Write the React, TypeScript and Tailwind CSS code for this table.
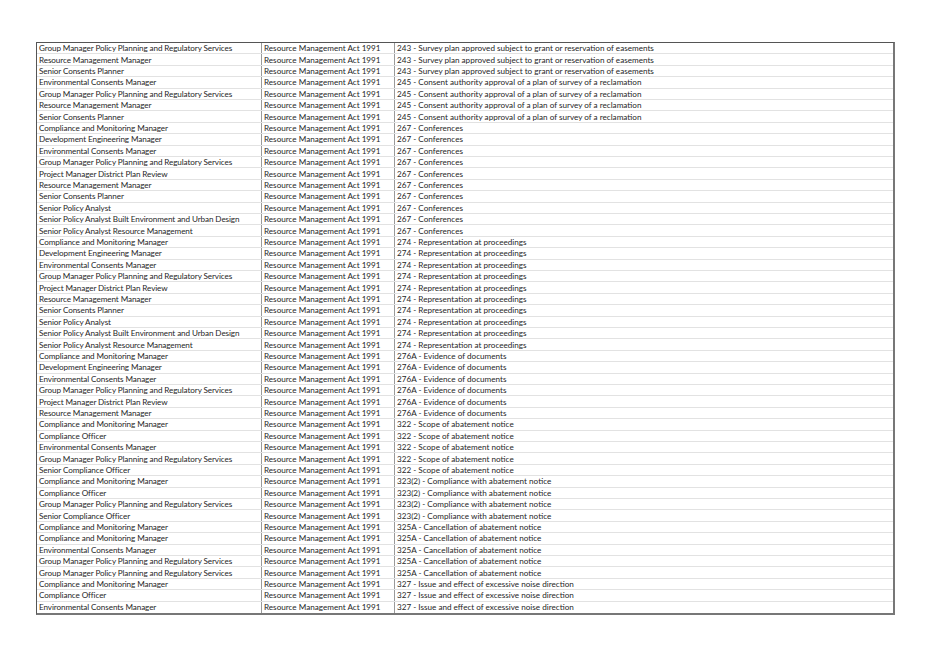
const GM = "Group Manager Policy Planning and Regulatory Services";
const RMM = "Resource Management Manager";
const SCP = "Senior Consents Planner";
const ECM = "Environmental Consents Manager";
const CMM = "Compliance and Monitoring Manager";
const DEM = "Development Engineering Manager";
const PM = "Project Manager District Plan Review";
const SPA = "Senior Policy Analyst";
const SPAB = "Senior Policy Analyst Built Environment and Urban Design";
const SPAR = "Senior Policy Analyst Resource Management";
const CO = "Compliance Officer";
const SCO = "Senior Compliance Officer";

const S243 = "243 - Survey plan approved subject to grant or reservation of easements";
const S245 = "245 - Consent authority approval of a plan of survey of a reclamation";
const S267 = "267 - Conferences";
const S274 = "274 - Representation at proceedings";
const S276 = "276A - Evidence of documents";
const S322 = "322 - Scope of abatement notice";
const S323 = "323(2) - Compliance with abatement notice";
const S325 = "325A - Cancellation of abatement notice";
const S327 = "327 - Issue and effect of excessive noise direction";

const rows: [string, string][] = [
  [GM, S243], [RMM, S243], [SCP, S243],
  [ECM, S245], [GM, S245], [RMM, S245], [SCP, S245],
  [CMM, S267], [DEM, S267], [ECM, S267], [GM, S267], [PM, S267], [RMM, S267], [SCP, S267], [SPA, S267], [SPAB, S267], [SPAR, S267],
  [CMM, S274], [DEM, S274], [ECM, S274], [GM, S274], [PM, S274], [RMM, S274], [SCP, S274], [SPA, S274], [SPAB, S274], [SPAR, S274],
  [CMM, S276], [DEM, S276], [ECM, S276], [GM, S276], [PM, S276], [RMM, S276],
  [CMM, S322], [CO, S322], [ECM, S322], [GM, S322], [SCO, S322],
  [CMM, S323], [CO, S323], [GM, S323], [SCO, S323],
  [CMM, S325], [CMM, S325], [ECM, S325], [GM, S325], [GM, S325],
  [CMM, S327], [CO, S327], [ECM, S327],
];

export default function App() {
  return (
    <div className="w-[939px] h-[664px] bg-white pt-[42px] pl-[36px]">
      <div
        className="w-[859px] h-[573px] grid grid-rows-[repeat(50,1fr)] border-l border-t border-[#555] border-r-2 border-b-2 border-r-[#777] border-b-[#777] text-[#262626] text-[8.15px] leading-none"
        style={{ fontFamily: "Lato, 'Open Sans', sans-serif" }}
      >
        {rows.map(([role, sec], i) => (
          <div
            key={i}
            className={`grid grid-cols-[225px_133px_1fr] ${i < rows.length - 1 ? "border-b border-[#e2e2e2]" : ""}`}
          >
            <div className="flex items-center pl-[2px] border-r border-[#9a9a9a] whitespace-nowrap overflow-hidden tracking-[-0.1px]">{role}</div>
            <div className="flex items-center pl-[2px] border-r border-[#9a9a9a] whitespace-nowrap">Resource Management Act 1991</div>
            <div className="flex items-center pl-[2px] whitespace-nowrap">{sec}</div>
          </div>
        ))}
      </div>
    </div>
  );
}
